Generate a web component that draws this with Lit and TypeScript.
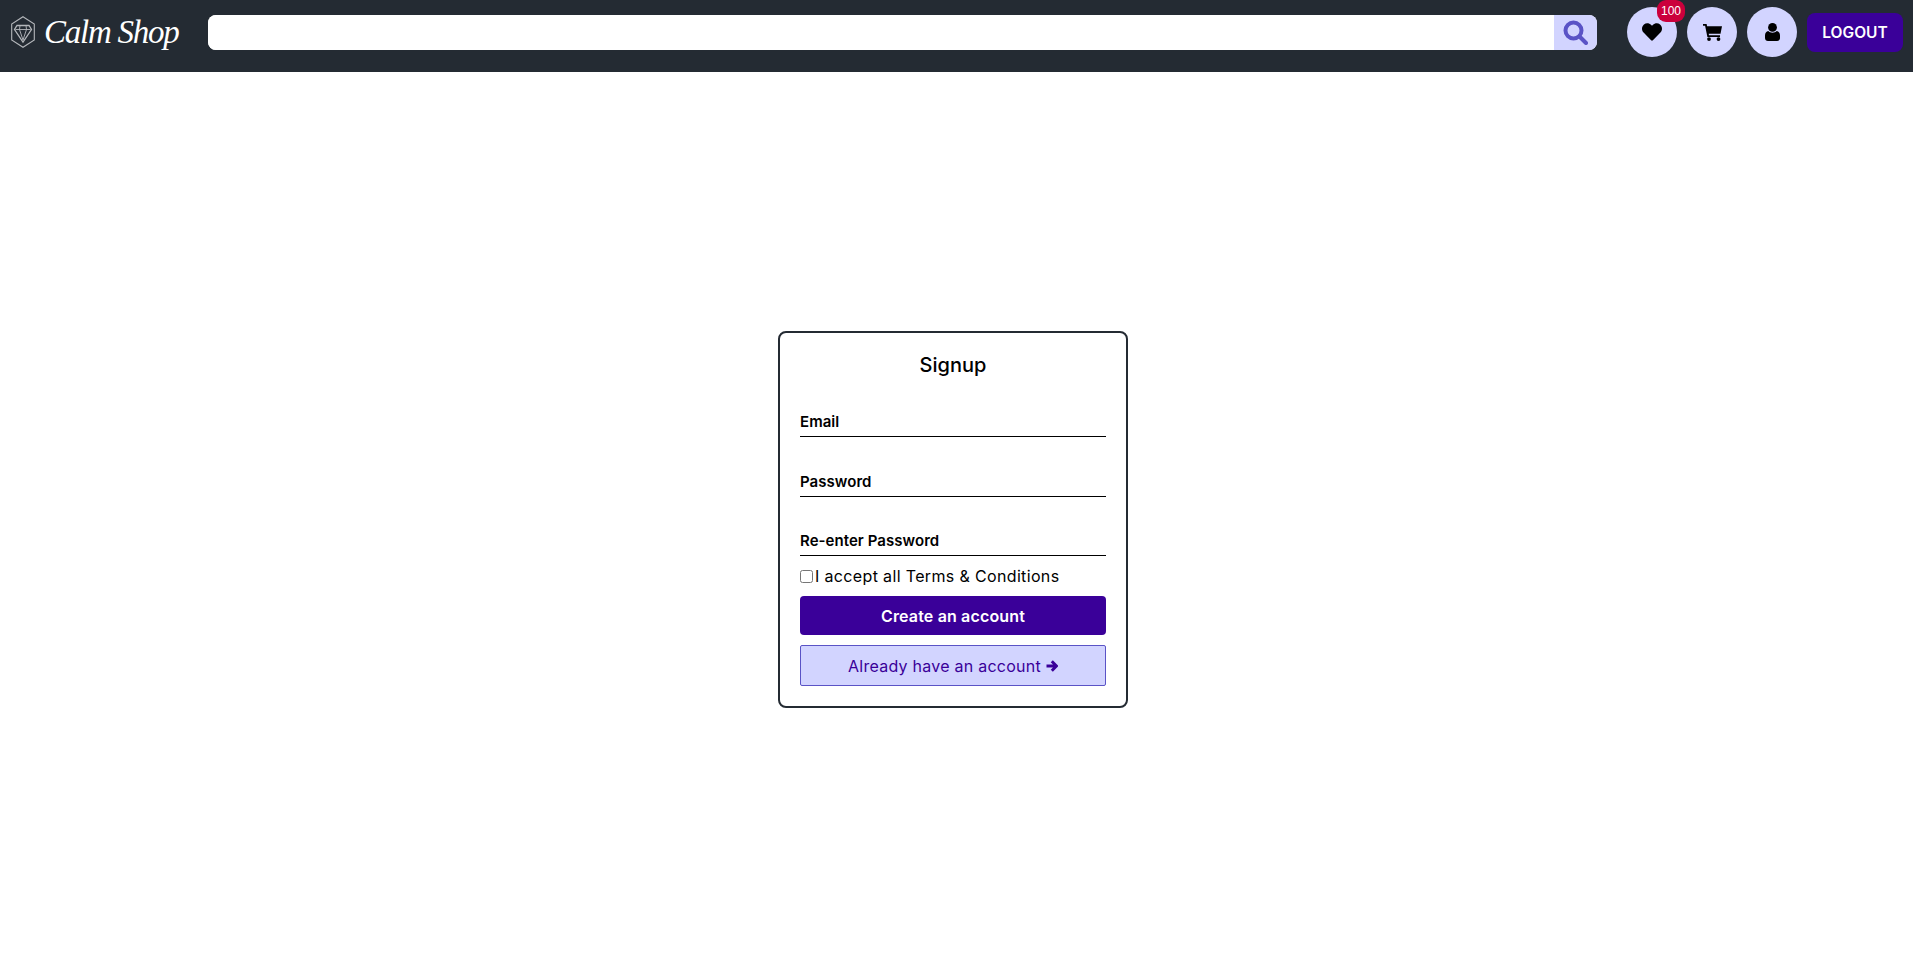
import { LitElement, html, css, svg } from "lit";
import { customElement } from "lit/decorators.js";

const heart = svg`<path d="M462.300 62.600C407.500 15.900 326 24.300 275.700 76.200L256 96.500l-19.700-20.300C186.100 24.300 104.500 15.900 49.700 62.600c-62.800 53.600-66.100 149.800-9.900 207.900l193.500 199.800c12.500 12.900 32.800 12.900 45.300 0l193.500-199.800c56.300-58.100 53-154.300-9.800-207.900z"/>`;

@customElement("app-root")
export class AppRoot extends LitElement {
  static styles = css`
    :host { display: block; font-family: "Inter", "Liberation Sans", sans-serif; color: #000; background: #fff; }
    * { box-sizing: border-box; }
    .nav { height: 72px; background: #242b33; display: flex; align-items: flex-start; padding: 0 10px 0 11px; }
    .brand { display: flex; align-items: center; gap: 9px; width: 197px; height: 64px; flex: none; }
    .brand svg { width: 24px; height: 32px; flex: none; }
    .brand span { font-family: "Liberation Serif", serif; font-style: italic; color: #fff; font-size: 33px; letter-spacing: -1.250px; white-space: nowrap; }
    .search { flex: none; width: 1389px; height: 35px; margin-top: 15px; display: flex; border-radius: 8px; overflow: hidden; background: #fff; }
    .search input { flex: 1; min-width: 0; border: 0; outline: 0; background: #fff; }
    .search button { width: 43px; border: 0; background: #d2d4ff; padding: 0; display: flex; align-items: center; justify-content: center; }
    .search svg { width: 25px; height: 25px; fill: none; stroke: #5a53c6; stroke-width: 4; stroke-linecap: round; }
    .actions { display: flex; gap: 10px; margin-left: 30px; margin-top: 7px; align-items: center; }
    .round { position: relative; width: 50px; height: 50px; border-radius: 50%; background: #d2d4ff; border: 0; padding: 0; display: flex; align-items: center; justify-content: center; }
    .round svg { fill: #000; }
    .badge { position: absolute; top: -7px; left: 30px; width: 28px; height: 22px; border-radius: 9px; background: #cb003c; color: #fff; font-size: 12px; display: flex; align-items: center; justify-content: center; }
    .logout { height: 39px; width: 96px; border: 0; border-radius: 8px; background: #3a0099; color: #fff; font: 600 15.500px "Inter", sans-serif; padding: 0; }
    .main { height: 895px; display: flex; align-items: center; justify-content: center; padding-right: 7px; }
    .card { width: 350px; height: 377px; border: 2px solid #242b33; border-radius: 8px; padding: 20px; display: flex; flex-direction: column; }
    h1 { margin: 0; font-size: 20px; font-weight: 550; line-height: 24px; text-align: center; height: 24px; }
    .field { height: 60px; display: flex; align-items: flex-end; }
    .field input { width: 100%; height: 30px; border: 0; border-bottom: 1px solid #000; outline: 0; padding: 0; font: 600 15px "Inter", sans-serif; letter-spacing: .05px; color: #000; background: transparent; }
    .field input::placeholder { color: #000; opacity: 1; }
    .check { display: flex; align-items: center; height: 20px; margin-top: 10px; font-size: 16px; letter-spacing: .35px; white-space: nowrap; }
    .check input { width: 13px; height: 13px; margin: 0 2px 0 0; }
    .primary { height: 39px; margin-top: 10px; border: 0; border-radius: 4px; background: #3a0099; color: #fff; font: 600 16px "Inter", sans-serif; letter-spacing: .15px; }
    .secondary { height: 41px; margin-top: 10px; border: 1px solid #5a53c6; border-radius: 2px; background: #d2d4ff; color: #3a0099; font: 400 16px "Inter", sans-serif; display: flex; align-items: center; justify-content: center; gap: 5px; letter-spacing: .25px; }
    .secondary svg { width: 12px; height: 12px; fill: none; stroke: #3a0099; stroke-width: 3; }
  `;

  render() {
    return html`
      <div class="nav">
        <div class="brand">
          <svg viewBox="0 0 24 32" fill="none" stroke="#b4b7bb" stroke-width="1.100">
            <path d="M12 .7 23.300 8v16L12 31.300.7 24V8z"/>
            <path d="M6 9.500h12l2.500 4L12 26 3.500 13.500z" stroke-width="1.300"/>
            <path d="M4.500 13.500h15M9 9.500l-.5 4L12 24l3.500-10.500-.5-4" stroke-width=".9"/>
          </svg>
          <span>Calm Shop</span>
        </div>
        <div class="search">
          <input type="text" aria-label="Search" />
          <button aria-label="Search">
            <svg viewBox="0 0 25 25"><circle cx="10.500" cy="10.500" r="8"/><path d="M17 17 23 23"/></svg>
          </button>
        </div>
        <div class="actions">
          <button class="round" aria-label="Wishlist">
            <svg width="20" height="20" viewBox="0 0 512 512">${heart}</svg>
            <span class="badge">100</span>
          </button>
          <button class="round" aria-label="Cart">
            <svg width="19" height="17" viewBox="0 0 19 17"><path d="M0 0h3.600l.5 2.200H19l-1.500 7.600H5.700l.3 1.400h11v1.800H4.400L2.100 1.800H0z"/><circle cx="6" cy="15.100" r="1.900"/><circle cx="15.500" cy="15.100" r="1.900"/></svg>
          </button>
          <button class="round" aria-label="Account">
            <svg width="15" height="18" viewBox="0 0 15 18"><circle cx="7.500" cy="4.400" r="4.400"/><path d="M3.300 8c1 1 2.500 1.700 4.200 1.700S10.700 9 11.700 8C13.700 8.300 15 10 15 12.500V15c0 1.700-1.300 3-3 3H3c-1.700 0-3-1.300-3-3v-2.500C0 10 1.300 8.300 3.300 8z"/></svg>
          </button>
          <button class="logout">LOGOUT</button>
        </div>
      </div>
      <div class="main">
        <form class="card" @submit=${(e: Event) => e.preventDefault()}>
          <h1>Signup</h1>
          <div class="field"><input type="email" placeholder="Email" aria-label="Email" /></div>
          <div class="field"><input type="password" placeholder="Password" aria-label="Password" /></div>
          <div class="field"><input type="password" placeholder="Re-enter Password" aria-label="Re-enter Password" /></div>
          <label class="check"><input type="checkbox" />I accept all Terms &amp; Conditions</label>
          <button class="primary" type="submit">Create an account</button>
          <button class="secondary" type="button">Already have an account
            <svg viewBox="0 0 12 12"><path d="M.5 6h9.500M5.800 1.300 10.500 6l-4.700 4.700"/></svg>
          </button>
        </form>
      </div>
    `;
  }
}
